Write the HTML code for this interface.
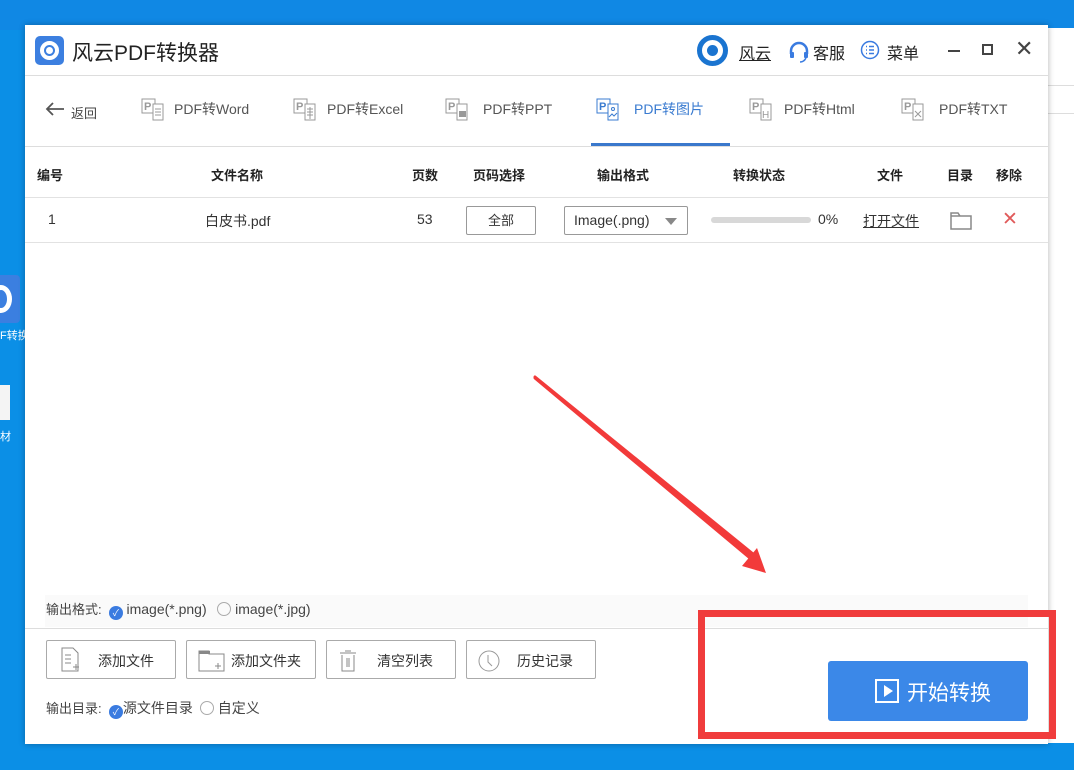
<!DOCTYPE html>
<html><head><meta charset="utf-8"><style>
*{margin:0;padding:0;box-sizing:border-box}
body{width:1074px;height:770px;overflow:hidden;background:#0b8fe6;font-family:"Liberation Sans","Noto Sans CJK SC",sans-serif;position:relative;color:#333}
.abs{position:absolute}
.win{position:absolute;left:25px;top:25px;width:1023px;height:719px;background:#fff;box-shadow:0 0 6px rgba(0,0,0,.3)}
.t{position:absolute;white-space:nowrap}
.hdr{font-size:13px;font-weight:bold;color:#222}
.btn{position:absolute;top:615px;height:39px;width:130px;border:1px solid #aaa;border-radius:2px;background:#fff;font-size:14px;color:#333}
.tab{position:absolute;top:74px;font-size:14px;color:#555}
.radio{display:inline-block;width:14px;height:14px;border-radius:50%;vertical-align:-2px}
</style></head><body>
<div class="abs" style="left:0;top:0;width:1074px;height:30px;background:#1088e4"></div>
<div class="abs" style="left:1040px;top:28px;width:34px;height:715px;background:#fff"></div>
<div class="abs" style="left:1048px;top:85px;width:26px;height:1px;background:#ddd"></div>
<div class="abs" style="left:1048px;top:113px;width:26px;height:1px;background:#ddd"></div>
<div class="abs" style="left:0;top:275px;width:20px;height:48px;background:#3b7fe0;border-radius:0 4px 4px 0"></div>
<div class="abs" style="left:-10px;top:285px;width:22px;height:28px;border:5px solid #fff;border-radius:50%"></div>
<div class="t" style="left:0;top:327px;font-size:11px;color:#fff">F转换</div>
<div class="abs" style="left:0;top:385px;width:10px;height:35px;background:#f4f4f4"></div>
<div class="t" style="left:0;top:428px;font-size:11px;color:#fff">材</div>

<div class="win">
 <div class="abs" style="left:10px;top:11px;width:29px;height:29px;background:#3c7fe0;border-radius:5px"></div>
 <div class="abs" style="left:15px;top:16px;width:19px;height:19px;border:4px solid #fff;border-radius:50%"></div>
 <div class="abs" style="left:21px;top:22px;width:7px;height:7px;background:#fff;border-radius:50%"></div>
 <div class="t" style="left:47px;top:12px;font-size:21px;color:#222">风云PDF转换器</div>
 <div class="abs" style="left:672px;top:10px;width:31px;height:31px;border:5px solid #1a74d0;border-radius:50%"></div>
 <div class="abs" style="left:682px;top:20px;width:11px;height:11px;background:#1a74d0;border-radius:50%"></div>
 <div class="t" style="left:714px;top:15px;font-size:16px;color:#222;text-decoration:underline">风云</div>
 <svg class="abs" style="left:763px;top:15px" width="22" height="24" viewBox="0 0 22 24"><path d="M3 14V11a8 8 0 0 1 16 0v3" fill="none" stroke="#3a7be0" stroke-width="2.5"/><rect x="2" y="12" width="4" height="6" rx="1" fill="#3a7be0"/><rect x="16" y="12" width="4" height="6" rx="1" fill="#3a7be0"/><path d="M18 18q-2 4-6 4" fill="none" stroke="#3a7be0" stroke-width="1.5"/></svg>
 <div class="t" style="left:788px;top:15px;font-size:16px;color:#222">客服</div>
 <svg class="abs" style="left:835px;top:15px" width="20" height="20"><circle cx="10" cy="10" r="8.5" fill="none" stroke="#3a7be0" stroke-width="1.5"/><path d="M6 6.5h1M9 6.5h5M6 10h1M9 10h5M6 13.5h1M9 13.5h5" stroke="#3a7be0" stroke-width="1.5"/></svg>
 <div class="t" style="left:862px;top:15px;font-size:16px;color:#222">菜单</div>
 <div class="abs" style="left:923px;top:25px;width:12px;height:2px;background:#444"></div>
 <div class="abs" style="left:957px;top:19px;width:11px;height:11px;border:2px solid #444"></div>
 <div class="t" style="left:990px;top:11px;font-size:22px;color:#444">✕</div>
 <div class="abs" style="left:0;top:50px;width:1023px;height:1px;background:#ddd"></div>
 <svg class="abs" style="left:20px;top:76px" width="20" height="16"><path d="M2 8h17M8 2L2 8l6 6" fill="none" stroke="#555" stroke-width="1.8"/></svg>
 <div class="t" style="left:46px;top:78px;font-size:13px;color:#444">返回</div>
 <svg class="abs" style="left:116px;top:70px" width="24" height="26"><rect x="1" y="4" width="13" height="14" fill="#fff" stroke="#999"/><text x="3" y="15" font-size="11" fill="#999" font-family="Liberation Sans" font-weight="bold">P</text><rect x="12" y="9" width="10" height="16" fill="#fff" stroke="#999"/><path d="M14 14h6M14 17h6M14 20h6" stroke="#999"/></svg>
 <div class="tab" style="left:149px">PDF转Word</div>
 <svg class="abs" style="left:268px;top:70px" width="24" height="26"><rect x="1" y="4" width="13" height="14" fill="#fff" stroke="#999"/><text x="3" y="15" font-size="11" fill="#999" font-family="Liberation Sans" font-weight="bold">P</text><rect x="12" y="9" width="10" height="16" fill="#fff" stroke="#999"/><path d="M14 14h6M14 17h6M14 20h6M17 12v12" stroke="#999"/></svg>
 <div class="tab" style="left:302px">PDF转Excel</div>
 <svg class="abs" style="left:420px;top:70px" width="24" height="26"><rect x="1" y="4" width="13" height="14" fill="#fff" stroke="#999"/><text x="3" y="15" font-size="11" fill="#999" font-family="Liberation Sans" font-weight="bold">P</text><rect x="12" y="9" width="10" height="16" fill="#fff" stroke="#999"/><rect x="14" y="16" width="7" height="6" fill="#999"/></svg>
 <div class="tab" style="left:458px">PDF转PPT</div>
 <svg class="abs" style="left:571px;top:70px" width="24" height="26"><rect x="1" y="4" width="13" height="14" fill="#fff" stroke="#3a7bd0"/><text x="3" y="15" font-size="11" fill="#3a7bd0" font-family="Liberation Sans" font-weight="bold">P</text><rect x="12" y="9" width="10" height="16" fill="#fff" stroke="#3a7bd0"/><circle cx="17" cy="14" r="1.5" fill="none" stroke="#3a7bd0"/><path d="M13 22l3-3 2 2 3-3" fill="none" stroke="#3a7bd0"/></svg>
 <div class="tab" style="left:609px;color:#3a7bd0">PDF转图片</div>
 <div class="abs" style="left:566px;top:118px;width:139px;height:3px;background:#3a78cc"></div>
 <svg class="abs" style="left:724px;top:70px" width="24" height="26"><rect x="1" y="4" width="13" height="14" fill="#fff" stroke="#999"/><text x="3" y="15" font-size="11" fill="#999" font-family="Liberation Sans" font-weight="bold">P</text><rect x="12" y="9" width="10" height="16" fill="#fff" stroke="#999"/><text x="13" y="23" font-size="10" fill="#999" font-family="Liberation Sans">H</text></svg>
 <div class="tab" style="left:759px">PDF转Html</div>
 <svg class="abs" style="left:876px;top:70px" width="24" height="26"><rect x="1" y="4" width="13" height="14" fill="#fff" stroke="#999"/><text x="3" y="15" font-size="11" fill="#999" font-family="Liberation Sans" font-weight="bold">P</text><rect x="12" y="9" width="10" height="16" fill="#fff" stroke="#999"/><path d="M14 16l6 6M20 16l-6 6" stroke="#999"/></svg>
 <div class="tab" style="left:914px">PDF转TXT</div>
 <div class="abs" style="left:0;top:121px;width:1023px;height:1px;background:#ddd"></div>
 <div class="t hdr" style="left:12px;top:140px">编号</div>
 <div class="t hdr" style="left:186px;top:140px">文件名称</div>
 <div class="t hdr" style="left:387px;top:140px">页数</div>
 <div class="t hdr" style="left:448px;top:140px">页码选择</div>
 <div class="t hdr" style="left:572px;top:140px">输出格式</div>
 <div class="t hdr" style="left:708px;top:140px">转换状态</div>
 <div class="t hdr" style="left:852px;top:140px">文件</div>
 <div class="t hdr" style="left:922px;top:140px">目录</div>
 <div class="t hdr" style="left:971px;top:140px">移除</div>
 <div class="abs" style="left:0;top:172px;width:1023px;height:1px;background:#e2e2e2"></div>
 <div class="t" style="left:23px;top:186px;font-size:14px">1</div>
 <div class="t" style="left:180px;top:186px;font-size:14px">白皮书.pdf</div>
 <div class="t" style="left:392px;top:186px;font-size:14px">53</div>
 <div class="abs" style="left:441px;top:181px;width:70px;height:29px;border:1px solid #999;border-radius:2px;font-size:13px;text-align:center;line-height:27px">全部</div>
 <div class="abs" style="left:539px;top:181px;width:124px;height:29px;border:1px solid #999;border-radius:2px;font-size:14px;line-height:27px;padding-left:9px">Image(.png)<span style="position:absolute;left:100px;top:11px;border:6px solid transparent;border-top:7px solid #888;border-bottom:0"></span></div>
 <div class="abs" style="left:686px;top:192px;width:100px;height:6px;background:#d8d8d8;border-radius:3px"></div>
 <div class="t" style="left:793px;top:186px;font-size:14px">0%</div>
 <div class="t" style="left:838px;top:186px;font-size:14px;text-decoration:underline">打开文件</div>
 <svg class="abs" style="left:925px;top:185px" width="22" height="20"><path d="M1 3h7l2 3h11v13H1z M1 6h9" fill="none" stroke="#888" stroke-width="1.5"/></svg>
 <div class="t" style="left:977px;top:183px;font-size:19px;color:#e05a5a">✕</div>
 <div class="abs" style="left:0;top:217px;width:1023px;height:1px;background:#e2e2e2"></div>
 <div class="abs" style="left:20px;top:570px;width:983px;height:32px;background:#fafafa"></div>
 <div class="t" style="left:21px;top:574px;font-size:13px;color:#444">输出格式: &nbsp;<span class="radio" style="background:#3a7be0;color:#fff;font-size:9px;text-align:center;line-height:14px">✓</span> <span style="font-size:14px">image(*.png)</span> &nbsp; <span class="radio" style="border:1px solid #aaa"></span> <span style="font-size:14px">image(*.jpg)</span></div>
 <div class="abs" style="left:0;top:603px;width:1023px;height:1px;background:#ddd"></div>
 <div class="btn" style="left:21px"><svg class="abs" style="left:13px;top:6px" width="22" height="26"><path d="M2 1h11l5 5v18H2z" fill="none" stroke="#888"/><path d="M5 8h6M5 12h6M5 16h6M13 20h6M16 17v6" stroke="#888"/></svg><span class="abs" style="left:51px;top:10px">添加文件</span></div>
 <div class="btn" style="left:161px"><svg class="abs" style="left:11px;top:8px" width="28" height="24"><path d="M1 2h10v3h15v17H1z" fill="none" stroke="#888"/><rect x="1" y="2" width="11" height="3" fill="#888"/><path d="M17 17h6M20 14v6" stroke="#888"/></svg><span class="abs" style="left:44px;top:10px">添加文件夹</span></div>
 <div class="btn" style="left:301px"><svg class="abs" style="left:11px;top:8px" width="20" height="24"><path d="M2 4h16M7 2h6M4 6v16h12V6M9 9v9M11 9v9" fill="none" stroke="#888"/></svg><span class="abs" style="left:50px;top:10px">清空列表</span></div>
 <div class="btn" style="left:441px"><svg class="abs" style="left:10px;top:8px" width="24" height="24"><circle cx="12" cy="12" r="10" fill="none" stroke="#999"/><path d="M11 6v7l4 4" fill="none" stroke="#999"/></svg><span class="abs" style="left:50px;top:10px">历史记录</span></div>
 <div class="t" style="left:21px;top:673px;font-size:13px;color:#444">输出目录: &nbsp;<span class="radio" style="background:#3a7be0;color:#fff;font-size:9px;text-align:center;line-height:14px">✓</span><span style="font-size:14px">源文件目录</span> &nbsp;<span class="radio" style="border:1px solid #aaa"></span> <span style="font-size:14px">自定义</span></div>
 <div class="abs" style="left:803px;top:636px;width:200px;height:60px;background:#3b88e8;border-radius:3px"></div>
 <div class="abs" style="left:850px;top:654px;width:24px;height:24px;border:2px solid #fff"></div>
 <div class="abs" style="left:859px;top:660px;border:6px solid transparent;border-left:9px solid #fff;border-right:0"></div>
 <div class="t" style="left:882px;top:652px;font-size:21px;color:#fff">开始转换</div>
</div>
<div class="abs" style="left:698px;top:610px;width:358px;height:129px;border:7px solid #f03c3c"></div>
<svg class="abs" style="left:0;top:0" width="1074" height="770"><path d="M535 377L535 378 750 558 753 554Z" fill="#f23a3a" stroke="#f23a3a" stroke-width="3" stroke-linejoin="round"/><path d="M766 573L742 566 757 548Z" fill="#f23a3a"/></svg>
</body></html>
